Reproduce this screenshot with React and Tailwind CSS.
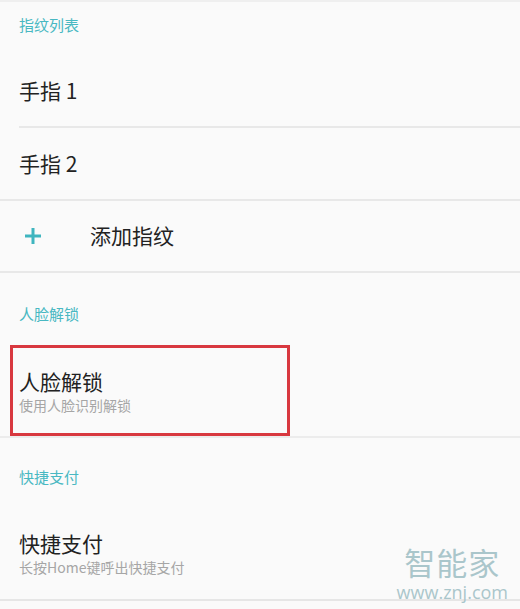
const font = { fontFamily: '"Noto Sans CJK SC", "Noto Sans", sans-serif' };

const Header = ({ children, className = '' }) => (
  <div className={`flex items-center pl-[19px] text-[15px] text-[#48b8c2] ${className}`}>{children}</div>
);

const Row = ({ children, className = '' }) => (
  <div className={`flex items-center text-[21px] text-[#222222] ${className}`}>{children}</div>
);

const Plus = () => (
  <svg width="20" height="20" viewBox="0 0 20 20" className="text-[#3fb5bf]">
    <path d="M10 2v16M2 10h16" stroke="currentColor" strokeWidth="3" />
  </svg>
);

export default function App() {
  return (
    <div className="relative w-[520px] h-[609px] overflow-hidden bg-[#fafafa]" style={font}>
      <div className="h-[2px] bg-[#efefef]" />
      <Header className="h-[46px]">指纹列表</Header>
      <Row className="h-[78px] pt-[8px] pl-[19px]">手指 1</Row>
      <div className="ml-[19px] h-[2px] bg-[#e8e8e8]" />
      <Row className="h-[71px] pl-[19px]">手指 2</Row>
      <div className="h-[2px] bg-[#e8e8e8]" />
      <Row className="h-[70px] pl-[23px]">
        <Plus />
        <span className="ml-[47px]">添加指纹</span>
      </Row>
      <div className="h-[2px] bg-[#e8e8e8]" />
      <Header className="h-[72px] pt-[11px]">人脸解锁</Header>
      <div className="relative h-[91px] flex flex-col items-start justify-center pl-[19px] pt-[2px]">
        <span className="text-[21px] leading-[26px] text-[#222222]">人脸解锁</span>
        <span className="text-[14px] leading-[22px] text-[#a6a6a6]">使用人脸识别解锁</span>
        <div className="absolute left-[10px] top-0 w-[280px] h-[91px] border-[3px] border-[#d8383f]" />
      </div>
      <div className="h-[2px] bg-[#ececec]" />
      <Header className="h-[68px] pt-[10px]">快捷支付</Header>
      <div className="h-[93px] flex flex-col items-start justify-center pl-[19px] pt-[2px]">
        <span className="text-[21px] leading-[26px] text-[#222222]">快捷支付</span>
        <span className="text-[14px] leading-[22px] text-[#a6a6a6]">长按Home键呼出快捷支付</span>
      </div>
      <div className="h-[2px] bg-[#e6e6e6]" />
      <div className="absolute right-[12px] bottom-[6px] flex flex-col items-center text-[#aac6cb]">
        <span className="text-[31px] leading-[38px] tracking-[1px]">智能家</span>
        <span className="text-[18px] leading-[22px]" style={{ fontFamily: '"Open Sans", sans-serif' }}>www.znj.com</span>
      </div>
    </div>
  );
}
